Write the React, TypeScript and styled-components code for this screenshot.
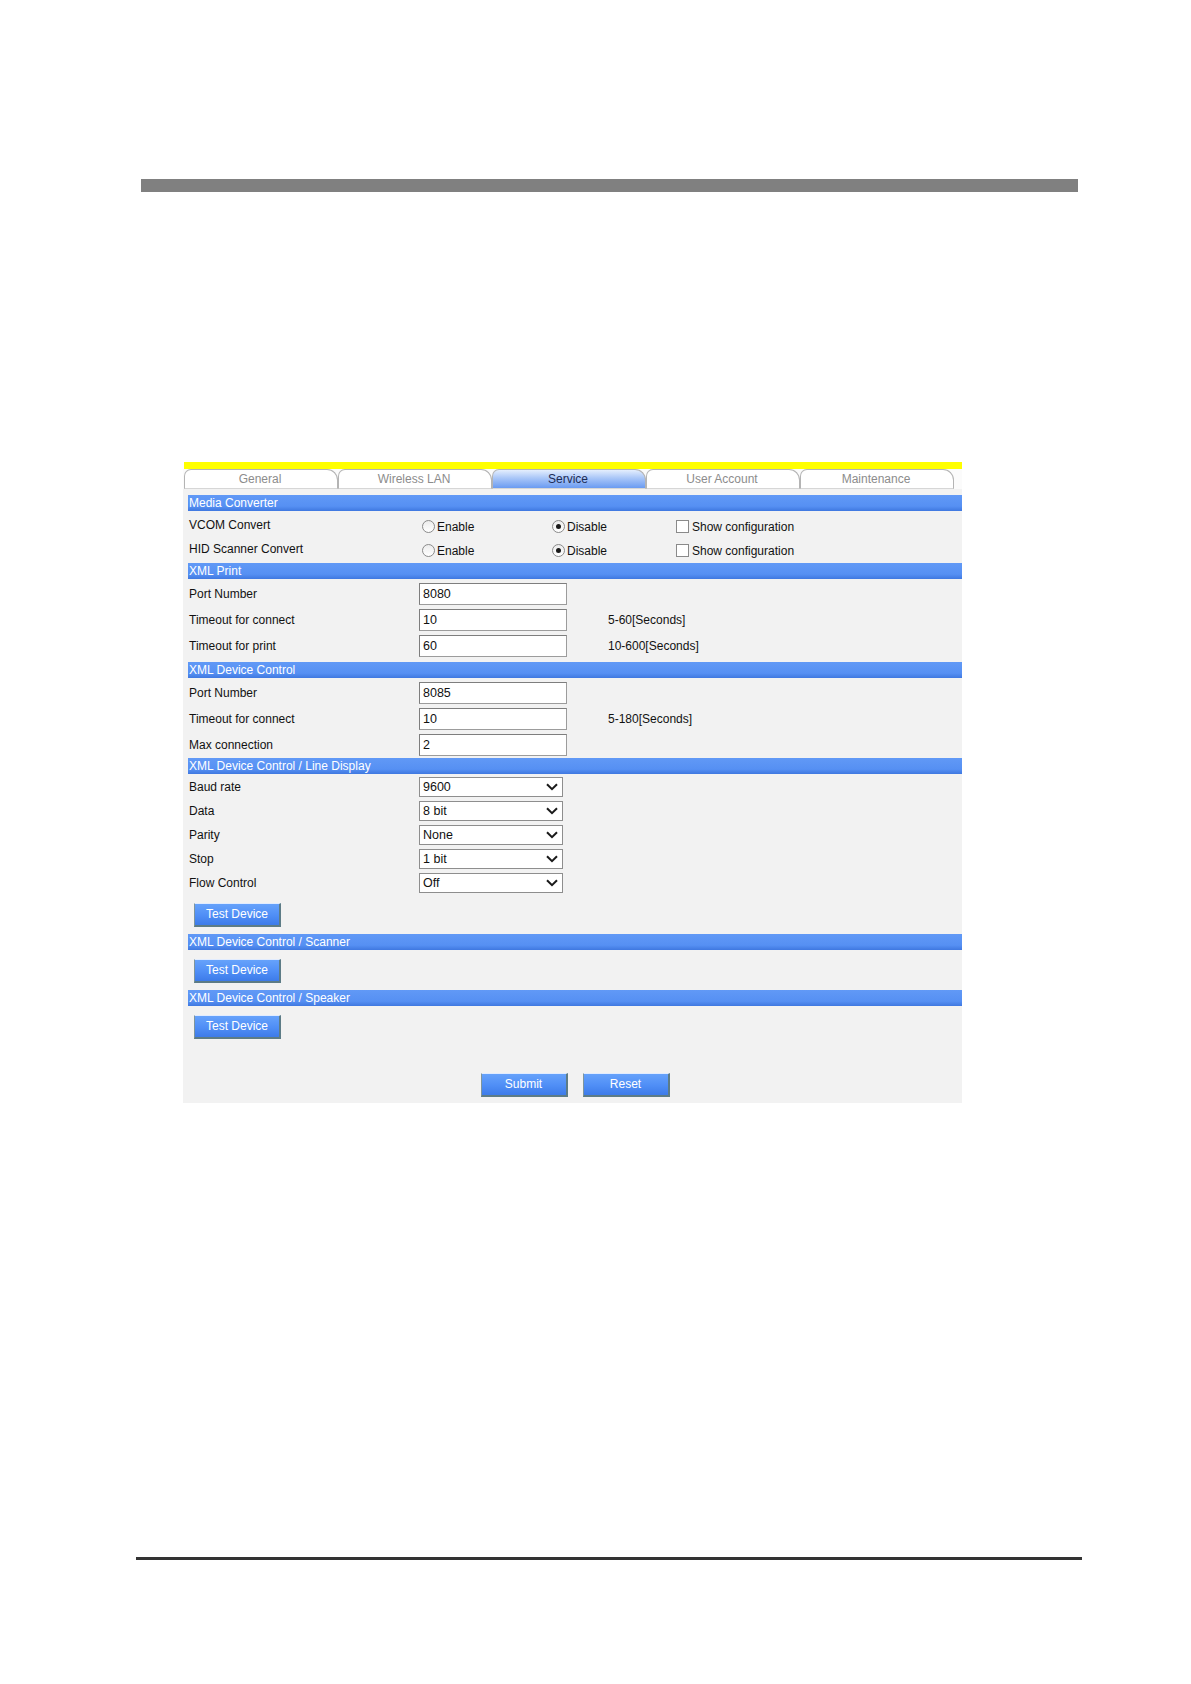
import React from "react";
import styled, { createGlobalStyle } from "styled-components";

const GlobalStyle = createGlobalStyle`
  html, body {
    margin: 0;
    padding: 0;
    background: #ffffff;
  }
  body {
    font-family: "Liberation Sans", Arial, sans-serif;
  }
`;

const Page = styled.div`
  width: 1191px;
  height: 1684px;
  box-sizing: border-box;
  padding-top: 179px;
  overflow: hidden;
`;

const TopRule = styled.div`
  margin-left: 141px;
  width: 937px;
  height: 13px;
  background: #808080;
`;

const BottomRule = styled.div`
  margin: 454px 0 0 136px;
  width: 946px;
  height: 3px;
  background: #333333;
`;

const Panel = styled.div`
  margin: 270px 0 0 183px;
  width: 779px;
  font-size: 12px;
  color: #111;
`;

const YellowBar = styled.div`
  margin-left: 1px;
  height: 7px;
  background: #ffff00;
`;

const TabBar = styled.div`
  display: flex;
  height: 20px;
  padding-left: 1px;
  background: #fbfbfb;
`;

const Tab = styled.div<{ $active?: boolean }>`
  box-sizing: border-box;
  width: 154px;
  height: 20px;
  padding-right: 2px;
  border: 1px solid #b4b4b4;
  border-bottom-color: #d6d6d6;
  border-radius: 7px 11px 0 0;
  text-align: center;
  line-height: 18px;
  color: ${(p) => (p.$active ? "#1c2b55" : "#8c8c8c")};
  background: ${(p) =>
    p.$active
      ? "linear-gradient(to bottom, #e4eefd 0%, #a9c6f8 45%, #6a9bf1 100%)"
      : "#ffffff"};
`;

const Body = styled.div`
  background: #f2f2f2;
  padding: 6px 0 6px 5px;
`;

const Header = styled.div`
  height: 16px;
  line-height: 16px;
  padding-left: 1px;
  color: #ffffff;
  background: linear-gradient(to bottom, #6199f6 0%, #5690f3 70%, #3f78e0 100%);
  white-space: nowrap;
`;

const Rows = styled.div<{ $pt?: number; $pb?: number }>`
  padding: ${(p) => p.$pt ?? 2}px 0 ${(p) => p.$pb ?? 0}px 1px;
`;

const Row = styled.div<{ $h: number }>`
  display: flex;
  align-items: center;
  height: ${(p) => p.$h}px;
`;

const Label = styled.div`
  width: 230px;
  flex: none;
`;

const TextBox = styled.input`
  box-sizing: border-box;
  width: 148px;
  height: 22px;
  margin: 0;
  padding: 0 3px;
  border: 1px solid #9c9c9c;
  border-top-color: #7e7e7e;
  border-left-color: #7e7e7e;
  background: #ffffff;
  font: inherit;
  font-size: 12.5px;
  color: #111;
  outline: none;
`;

const Hint = styled.div`
  margin-left: 41px;
`;

const SelectBox = styled.div`
  box-sizing: border-box;
  display: flex;
  align-items: center;
  justify-content: space-between;
  width: 144px;
  height: 20px;
  padding: 0 4px 0 3px;
  border: 1px solid #8e8e8e;
  background: #ffffff;
  font-size: 12.5px;
  line-height: 18px;
`;

const Option = styled.label<{ $w: number }>`
  display: flex;
  align-items: center;
  width: ${(p) => p.$w}px;
  padding-left: 3px;
  padding-top: 3px;
  box-sizing: border-box;
`;

const RadioDot = styled.span<{ $on?: boolean }>`
  position: relative;
  box-sizing: border-box;
  width: 13px;
  height: 13px;
  margin-right: 2px;
  border: 1px solid #8a8a8a;
  border-radius: 50%;
  background: linear-gradient(to bottom, #ececec, #ffffff);
  &::after {
    content: "";
    display: ${(p) => (p.$on ? "block" : "none")};
    position: absolute;
    left: 3px;
    top: 3px;
    width: 5px;
    height: 5px;
    border-radius: 50%;
    background: #1a1a1a;
  }
`;

const CheckSquare = styled.span`
  box-sizing: border-box;
  width: 13px;
  height: 13px;
  margin-right: 3px;
  border: 1px solid #8a8a8a;
  background: #ffffff;
`;

const ButtonRow = styled.div<{ $pt: number; $pb: number; $center?: boolean }>`
  display: flex;
  gap: 15px;
  justify-content: ${(p) => (p.$center ? "center" : "flex-start")};
  padding: ${(p) => p.$pt}px 0 ${(p) => p.$pb}px ${(p) => (p.$center ? 0 : 6)}px;
`;

const BlueButton = styled.button`
  box-sizing: border-box;
  width: 87px;
  height: 24px;
  margin: 0;
  padding: 0 0 1px;
  border-style: solid;
  border-width: 1px 2px 2px 1px;
  border-color: #e1ecff #5d7c86 #5d7c86 #7e959c;
  background: linear-gradient(to bottom, #66a2fb 0%, #4f8ef6 55%, #3d7be9 100%);
  color: #ffffff;
  font-family: "Liberation Sans", Arial, sans-serif;
  font-size: 12px;
  cursor: pointer;
`;

const Chevron = () => (
  <svg width="12" height="8" viewBox="0 0 12 8">
    <path d="M1 1.2 L6 6.2 L11 1.2" fill="none" stroke="#1a1a1a" strokeWidth="2" />
  </svg>
);

const tabs = ["General", "Wireless LAN", "Service", "User Account", "Maintenance"];

const printRows = [
  { label: "Port Number", value: "8080" },
  { label: "Timeout for connect", value: "10", hint: "5-60[Seconds]" },
  { label: "Timeout for print", value: "60", hint: "10-600[Seconds]" },
];

const controlRows = [
  { label: "Port Number", value: "8085" },
  { label: "Timeout for connect", value: "10", hint: "5-180[Seconds]" },
  { label: "Max connection", value: "2" },
];

const displayRows = [
  { label: "Baud rate", value: "9600" },
  { label: "Data", value: "8 bit" },
  { label: "Parity", value: "None" },
  { label: "Stop", value: "1 bit" },
  { label: "Flow Control", value: "Off" },
];

const converters = ["VCOM Convert", "HID Scanner Convert"];

type InputRow = { label: string; value: string; hint?: string };

const InputRows = ({ rows, pb }: { rows: InputRow[]; pb: number }) => (
  <Rows $pb={pb}>
    {rows.map((r) => (
      <Row $h={26} key={r.label}>
        <Label>{r.label}</Label>
        <TextBox defaultValue={r.value} readOnly />
        {r.hint && <Hint>{r.hint}</Hint>}
      </Row>
    ))}
  </Rows>
);

export default function App() {
  return (
    <>
      <GlobalStyle />
      <Page>
        <TopRule />
        <Panel>
          <YellowBar />
          <TabBar>
            {tabs.map((t) => (
              <Tab key={t} $active={t === "Service"}>
                {t}
              </Tab>
            ))}
          </TabBar>
          <Body>
            <Header>Media Converter</Header>
            <Rows $pt={2} $pb={2}>
              {converters.map((c) => (
                <Row $h={24} key={c}>
                  <Label>{c}</Label>
                  <Option $w={130}>
                    <RadioDot />
                    Enable
                  </Option>
                  <Option $w={124}>
                    <RadioDot $on />
                    Disable
                  </Option>
                  <Option $w={200}>
                    <CheckSquare />
                    Show configuration
                  </Option>
                </Row>
              ))}
            </Rows>

            <Header>XML Print</Header>
            <InputRows rows={printRows} pb={3} />

            <Header>XML Device Control</Header>
            <InputRows rows={controlRows} pb={0} />

            <Header>XML Device Control / Line Display</Header>
            <Rows $pt={1}>
              {displayRows.map((r) => (
                <Row $h={24} key={r.label}>
                  <Label>{r.label}</Label>
                  <SelectBox>
                    <span>{r.value}</span>
                    <Chevron />
                  </SelectBox>
                </Row>
              ))}
            </Rows>
            <ButtonRow $pt={8} $pb={7}>
              <BlueButton>Test Device</BlueButton>
            </ButtonRow>

            <Header>XML Device Control / Scanner</Header>
            <ButtonRow $pt={9} $pb={7}>
              <BlueButton>Test Device</BlueButton>
            </ButtonRow>

            <Header>XML Device Control / Speaker</Header>
            <ButtonRow $pt={9} $pb={0}>
              <BlueButton>Test Device</BlueButton>
            </ButtonRow>

            <ButtonRow $pt={34} $pb={0} $center>
              <BlueButton>Submit</BlueButton>
              <BlueButton>Reset</BlueButton>
            </ButtonRow>
          </Body>
        </Panel>
        <BottomRule />
      </Page>
    </>
  );
}
